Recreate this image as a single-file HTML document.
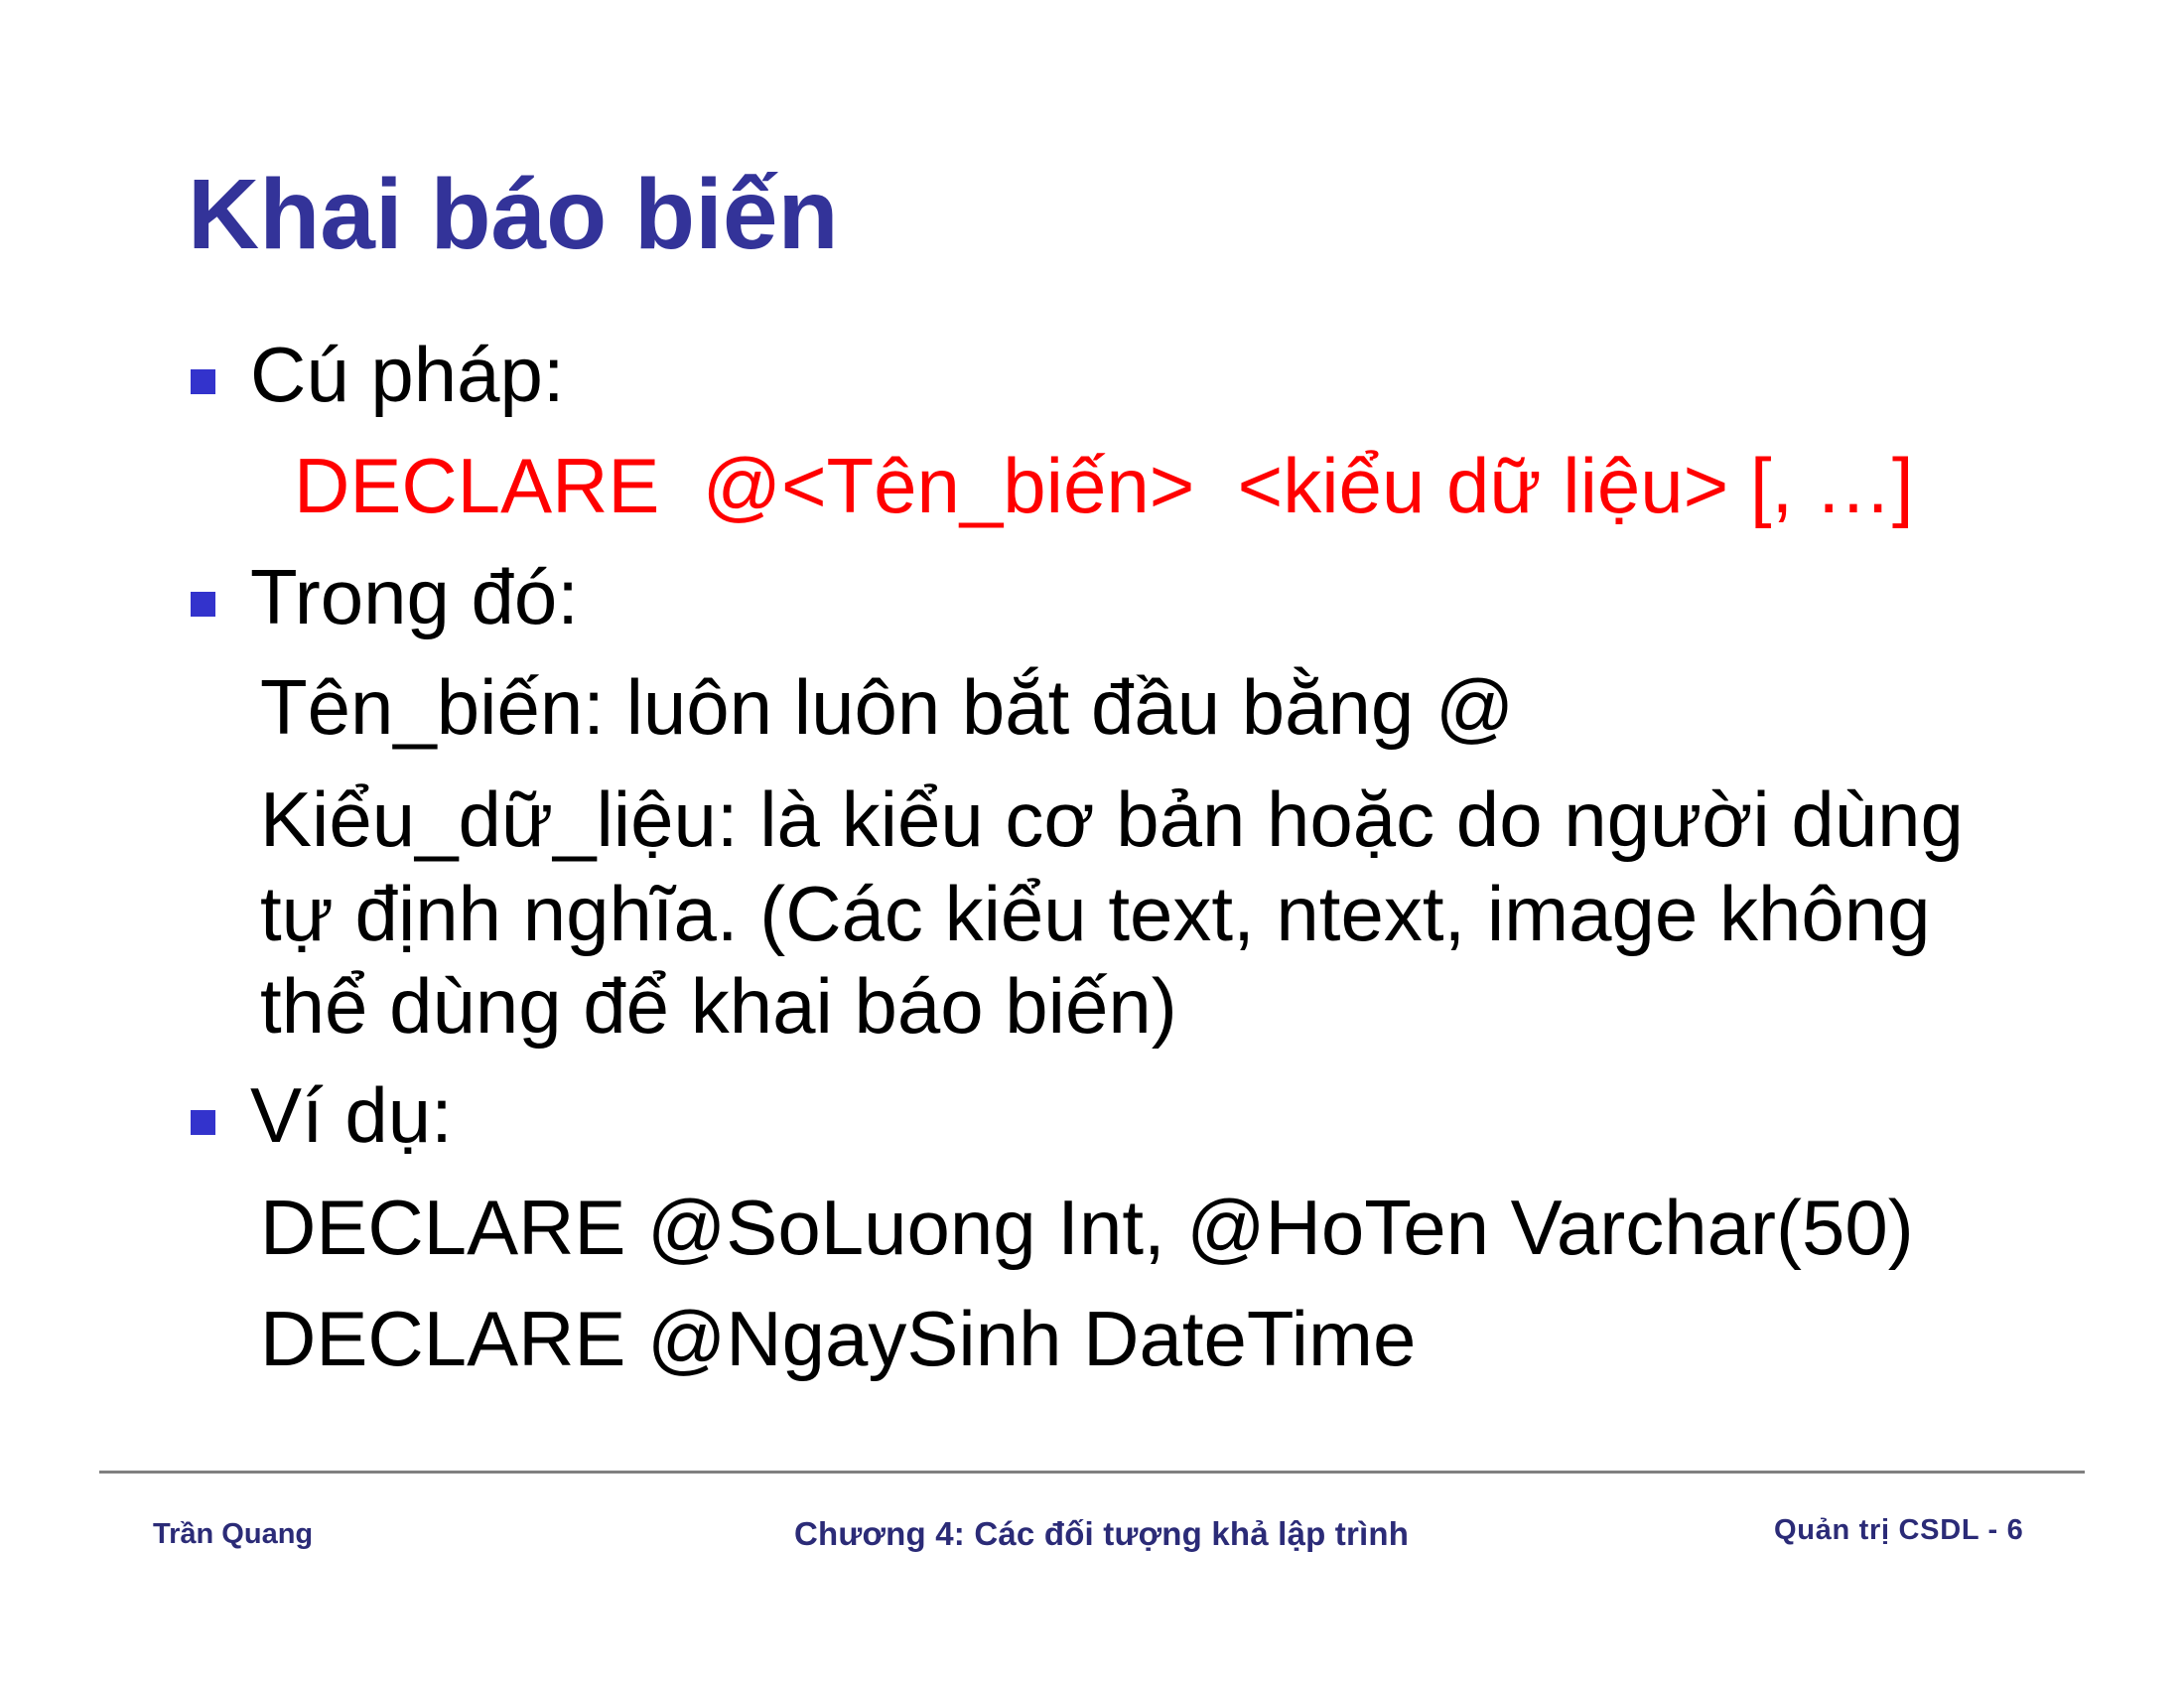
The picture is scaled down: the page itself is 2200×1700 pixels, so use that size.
<!DOCTYPE html>
<html><head><meta charset="utf-8"><style>
body{margin:0;width:2200px;height:1700px;background:#fff;position:relative;overflow:hidden;font-family:"Liberation Sans",Arial,sans-serif}
.t{position:absolute;white-space:nowrap;line-height:1}
.b{font-size:78px;color:#000}
.sq{position:absolute;width:25px;height:25px;background:#3333cc}
.f{font-size:29px;font-weight:bold;color:#2b2b77}
</style></head><body>
<div class="t" style="left:189px;top:166px;font-size:100px;font-weight:bold;color:#333399">Khai báo biến</div>
<div class="sq" style="left:192px;top:372px"></div>
<div class="t b" style="left:252px;top:338px">Cú pháp:</div>
<div class="t b" style="left:296px;top:450px;color:#ff0000">DECLARE&nbsp; @&lt;Tên_biến&gt;&nbsp; &lt;kiểu dữ liệu&gt; [, …]</div>
<div class="sq" style="left:192px;top:596px"></div>
<div class="t b" style="left:252px;top:562px">Trong đó:</div>
<div class="t b" style="left:262px;top:673px">Tên_biến: luôn luôn bắt đầu bằng @</div>
<div class="t b" style="left:262px;top:786px">Kiểu_dữ_liệu: là kiểu cơ bản hoặc do người dùng</div>
<div class="t b" style="left:262px;top:881px">tự định nghĩa. (Các kiểu text, ntext, image không</div>
<div class="t b" style="left:262px;top:974px">thể dùng để khai báo biến)</div>
<div class="sq" style="left:192px;top:1118px"></div>
<div class="t b" style="left:252px;top:1084px">Ví dụ:</div>
<div class="t b" style="left:262px;top:1197px">DECLARE @SoLuong Int, @HoTen Varchar(50)</div>
<div class="t b" style="left:262px;top:1309px">DECLARE @NgaySinh DateTime</div>
<div style="position:absolute;left:100px;top:1481px;width:2000px;height:3px;background:#808080"></div>
<div class="t f" style="left:154px;top:1531px">Trần Quang</div>
<div class="t f" style="left:800px;top:1528px;font-size:33px;letter-spacing:0.2px">Chương 4: Các đối tượng khả lập trình</div>
<div class="t f" style="left:1787px;top:1527px;letter-spacing:0.7px">Quản trị CSDL - 6</div>
</body></html>
